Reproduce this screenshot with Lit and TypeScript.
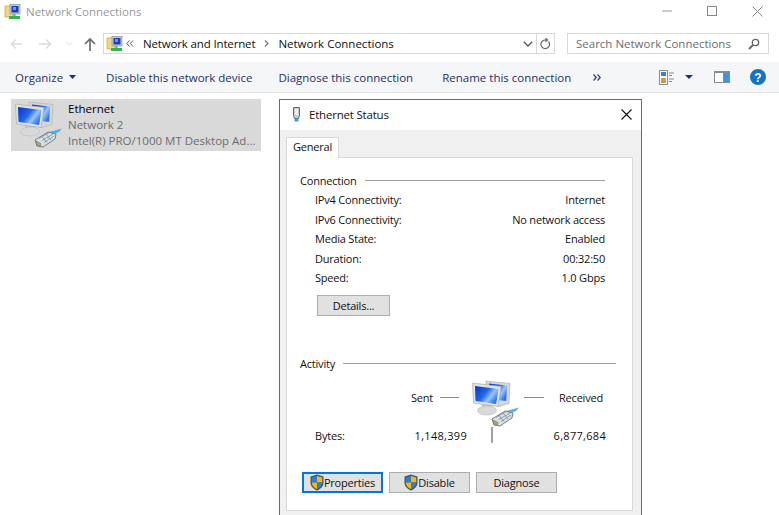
import { LitElement, html, css } from "lit";
import { customElement } from "lit/decorators.js";

const folderIcon = html`<svg width="17" height="17" viewBox="0 0 17 17">
  <path d="M1 3h5l1-1h6v6H9v6H1z" fill="#f3d77e" stroke="#c9a94f" stroke-width=".8" />
  <rect x="6" y="1.500" width="10" height="9.500" fill="#c7cdd3" stroke="#8a929a" stroke-width=".7" />
  <rect x="7.500" y="3" width="7" height="6.500" fill="#1a3fb4" />
  <rect x="9" y="4" width="3" height="3" fill="#6d9be8" />
  <rect x="9.500" y="11" width="2" height="2" fill="#8a929a" />
  <rect x="5" y="13" width="11" height="3" fill="#32b44a" />
</svg>`;

// two monitors and an ethernet plug, shared by the list item and the dialog
const networkIcon = html`<svg width="48" height="48" viewBox="0 0 48 48">
  <defs>
    <linearGradient id="scr" x1="0" y1="0" x2="1" y2=".6">
      <stop offset="0" stop-color="#0b35c4" />
      <stop offset=".5" stop-color="#1f68e8" />
      <stop offset=".75" stop-color="#9cc4f6" />
      <stop offset="1" stop-color="#2a78ee" />
    </linearGradient>
  </defs>
  <path d="M14 1l24 2.500-1 20-10 3-13-3z" fill="#d5d7d5" stroke="#b2b4b2" stroke-width=".7" />
  <path d="M17 3.500l18 2-.7 15.500-17.300-2z" fill="url(#scr)" />
  <path d="M10 22h9l1 6h-10z" fill="#c5c7c5" />
  <ellipse cx="15" cy="30.500" rx="9.500" ry="4.500" fill="#d8dad8" stroke="#b9bbb9" stroke-width=".6" />
  <path d="M.5 3l28.500 3.500-3 20L1.500 23z" fill="#e0e2e0" stroke="#aeb0ae" stroke-width=".7" />
  <path d="M3 6l23.500 3-2.300 15L3.500 21z" fill="url(#scr)" />
  <path d="M34 31l13-3.500-3 3.500-6 2.500z" fill="#4fb4e8" />
  <path d="M20 39l13-8 8 2-1 5-12 8-6-1z" fill="#d7e0e4" stroke="#6a767e" stroke-width=".9" />
  <path d="M21 40l5 2.500-.5 2.500-4-1z" fill="#b9a25c" stroke="#5e6a70" stroke-width=".5" />
  <path d="M24 37.500l11-6.500M27 39.500l11-6.500M29 41.500l10-6.500M27 35.500l5 6M31 33l5 6" stroke="#7f8f97" stroke-width=".8" fill="none" />
</svg>`;

const shieldIcon = html`<svg width="14" height="17" viewBox="0 0 14 17">
  <path d="M7 .5l6.500 2v6c0 4-3 6.500-6.500 8-3.500-1.500-6.500-4-6.500-8v-6z" fill="#47566a" />
  <path d="M7 2L1.800 3.500V8.500H7z" fill="#2a7fd0" />
  <path d="M7 2l5.200 1.500V8.500H7z" fill="#f4b619" />
  <path d="M1.800 8.500H7V15C4 13.800 1.800 11.700 1.800 8.500z" fill="#f4b619" />
  <path d="M12.200 8.500H7V15c3-1.200 5.200-3.300 5.200-6.500z" fill="#2a7fd0" />
</svg>`;

const statusRows = [
  ["IPv4 Connectivity:", "Internet"],
  ["IPv6 Connectivity:", "No network access"],
  ["Media State:", "Enabled"],
  ["Duration:", "00:32:50"],
  ["Speed:", "1.0 Gbps"],
];

@customElement("app-root")
export class AppRoot extends LitElement {
  static styles = css`
    :host {
      display: block;
      position: relative;
      height: 515px;
      overflow: hidden;
      background: #fff;
      font-family: "Open Sans", "Liberation Sans", sans-serif;
      font-size: 11.5px;
      color: #000;
    }
    svg {
      display: block;
      flex-shrink: 0;
    }
    .titlebar {
      height: 30px;
      display: flex;
      align-items: center;
      padding: 0 16px 7px 4px;
      box-sizing: border-box;
      gap: 5px;
      color: #999;
    }
    .titlebar .name {
      flex: 1;
    }
    .controls {
      display: flex;
      gap: 35px;
    }
    .nav {
      height: 32px;
      display: flex;
      align-items: flex-start;
      padding: 3px 10px 0 9px;
      box-sizing: border-box;
    }
    .arrows {
      width: 94px;
      height: 21px;
      display: flex;
      align-items: center;
    }
    .address {
      width: 452px;
      height: 21px;
      box-sizing: border-box;
      border: 1px solid #d9d9d9;
      display: flex;
      align-items: center;
      padding-left: 2px;
      color: #111;
    }
    .crumbs {
      flex: 1;
      display: flex;
      align-items: center;
    }
    .crumbs .tight {
      letter-spacing: -0.15px;
    }
    .refresh {
      width: 17px;
      height: 100%;
      border-left: 1px solid #d9d9d9;
      display: flex;
      align-items: center;
      justify-content: center;
    }
    .search {
      margin-left: 12px;
      width: 202px;
      height: 21px;
      box-sizing: border-box;
      border: 1px solid #d9d9d9;
      display: flex;
      align-items: center;
      justify-content: space-between;
      padding: 0 8px;
      color: #6d6d6d;
    }
    .toolbar {
      height: 31px;
      background: #f5f6f7;
      border-bottom: 1px solid #e5e5e5;
      display: flex;
      align-items: center;
      padding: 0 13px 0 15px;
      box-sizing: border-box;
      color: #1e2f6e;
    }
    .toolbar .spacer {
      flex: 1;
    }
    .item {
      margin: 6px 0 0 11px;
      width: 250px;
      height: 52px;
      background: #d9d9d9;
      display: flex;
      padding: 2px 0 0 4px;
      box-sizing: border-box;
      gap: 5px;
      line-height: 16px;
    }
    .item .sub {
      color: #6d6d6d;
    }
    .dialog {
      position: absolute;
      left: 279px;
      top: 99px;
      width: 363px;
      height: 430px;
      box-sizing: border-box;
      border: 1px solid #6b6b6b;
      background: #f0f0f0;
      color: #111;
      font-size: 11px;
      letter-spacing: -0.2px;
    }
    .dlg-title {
      height: 30px;
      box-sizing: border-box;
      background: #fff;
      display: flex;
      align-items: center;
      padding: 0 9px 2px 12px;
      gap: 8px;
      font-size: 11.5px;
    }
    .dlg-title .name {
      flex: 1;
    }
    .tab {
      margin: 7px 0 -1px 6px;
      width: 53px;
      height: 21px;
      box-sizing: border-box;
      background: #fff;
      border: 1px solid #d9d9d9;
      border-bottom: none;
      position: relative;
      z-index: 1;
      text-align: center;
      line-height: 17px;
    }
    .panel {
      margin-left: 6px;
      width: 347px;
      height: 354px;
      box-sizing: border-box;
      background: #fff;
      border: 1px solid #d9d9d9;
      padding: 14px 0 0 13px;
    }
    .legend {
      display: flex;
      align-items: center;
      height: 16px;
      gap: 8px;
      width: 316px;
    }
    .legend::after {
      content: "";
      flex: 1;
      height: 1px;
      background: #a0a0a0;
    }
    .legend.connection {
      width: 305px;
    }
    .rows {
      margin: 2px 0 0 15px;
      width: 290px;
      display: grid;
      grid-auto-rows: 19.5px;
      align-items: center;
    }
    .row {
      display: flex;
      justify-content: space-between;
    }
    .btn {
      box-sizing: border-box;
      height: 21px;
      border: 1px solid #adadad;
      background: #e1e1e1;
      display: flex;
      align-items: center;
      justify-content: center;
    }
    .details {
      width: 73px;
      margin: 7.500px 0 39px 17px;
    }
    .traffic {
      margin-top: 9px;
      width: 305px;
      height: 40px;
      display: grid;
      grid-template-columns: 172px 48px 1fr;
    }
    .traffic .side {
      display: flex;
      align-items: center;
      height: 35px;
    }
    .dash {
      height: 1px;
      background: #8a8a8a;
    }
    .sent {
      justify-content: flex-end;
      gap: 7px;
      padding-right: 13px;
      box-sizing: border-box;
    }
    .sent .dash {
      width: 19px;
    }
    .recv {
      gap: 15px;
      padding-left: 4px;
    }
    .recv .dash {
      width: 20px;
      flex-shrink: 0;
    }
    .bytes {
      margin: 6px 0 0 15px;
      width: 291px;
      height: 18px;
      display: grid;
      grid-template-columns: 152px 1fr auto;
      align-items: center;
    }
    .bytes .num {
      letter-spacing: 0.3px;
    }
    .bytes .first {
      display: flex;
      justify-content: space-between;
    }
    .tick {
      width: 2px;
      height: 16px;
      background: #a0a0a0;
      margin-left: 24px;
    }
    .actions {
      margin: 28px 0 0 2px;
      display: flex;
      gap: 6px;
    }
    .actions .btn {
      width: 81px;
    }
    .actions .primary {
      border: 2px solid #0078d7;
    }
  `;

  render() {
    return html`
      <div class="titlebar">
        ${folderIcon}
        <span class="name">Network Connections</span>
        <div class="controls">
          <svg width="10" height="10" viewBox="0 0 10 10"><path d="M0 5h10" stroke="#999" /></svg>
          <svg width="10" height="10" viewBox="0 0 10 10"><rect x=".5" y=".5" width="9" height="9" fill="none" stroke="#888" /></svg>
          <svg width="11" height="11" viewBox="0 0 11 11"><path d="M.5 .5l10 10M10.500 .5l-10 10" stroke="#888" /></svg>
        </div>
      </div>
      <div class="nav">
        <div class="arrows">
          <svg width="12" height="12" viewBox="0 0 12 12" style="margin-left:1px"><path d="M12 6H1.500M6 1.500L1.500 6 6 10.500" fill="none" stroke="#dcdcdc" stroke-width="1.500" /></svg>
          <svg width="13" height="12" viewBox="0 0 13 12" style="margin-left:17px"><path d="M0 6h11.500M7 1.500L11.500 6 7 10.500" fill="none" stroke="#dcdcdc" stroke-width="1.500" /></svg>
          <svg width="7" height="5" viewBox="0 0 7 5" style="margin-left:14px"><path d="M.5 1L3.500 4l3-3" fill="none" stroke="#dcdcdc" /></svg>
          <svg width="12" height="14" viewBox="0 0 12 14" style="margin-left:11px"><path d="M6 14V2M1 7l5-5 5 5" fill="none" stroke="#6d6d6d" stroke-width="1.700" /></svg>
        </div>
        <div class="address">
          ${folderIcon}
          <div class="crumbs">
            <svg width="8" height="7" viewBox="0 0 8 7" style="margin:0 9px 0 3px"><path d="M3.500 .5L.8 3.500l2.700 3M7 .5L4.300 3.500 7 6.500" fill="none" stroke="#555" /></svg>
            <span class="tight">Network and Internet</span>
            <svg width="5" height="7" viewBox="0 0 5 7" style="margin:0 9px"><path d="M1 .5l3 3-3 3" fill="none" stroke="#777" stroke-width="1.200" /></svg>
            <span>Network Connections</span>
          </div>
          <svg width="10" height="6" viewBox="0 0 10 6" style="margin-right:3px"><path d="M.8 .8L5 5l4.200-4.200" fill="none" stroke="#555" stroke-width="1.300" /></svg>
          <div class="refresh">
            <svg width="11" height="12" viewBox="0 0 11 12"><path d="M8.500 3.500A4.300 4.300 0 1 1 5 2H7.500M5.500 .2L7.500 2 5.500 3.800" fill="none" stroke="#666" stroke-width="1.200" /></svg>
          </div>
        </div>
        <div class="search">
          <span>Search Network Connections</span>
          <svg width="12" height="12" viewBox="0 0 12 12"><circle cx="7.500" cy="4.500" r="3.200" fill="none" stroke="#666" stroke-width="1.300" /><path d="M5 7l-4 4" stroke="#666" stroke-width="1.800" /></svg>
        </div>
      </div>
      <div class="toolbar">
        <span>Organize</span>
        <svg width="7" height="4" viewBox="0 0 7 4" style="margin:0 30px 0 6px"><path d="M0 0h7L3.500 4z" fill="#1e2f6e" /></svg>
        <span style="margin-right:26px">Disable this network device</span>
        <span style="margin-right:29px">Diagnose this connection</span>
        <span>Rename this connection</span>
        <svg width="8" height="7" viewBox="0 0 8 7" style="margin-left:22px"><path d="M.5 .5l2.800 3-2.800 3M4.500 .5l2.800 3-2.800 3" fill="none" stroke="#1e2f6e" stroke-width="1.100" /></svg>
        <span class="spacer"></span>
        <svg width="15" height="15" viewBox="0 0 15 15">
          <rect x=".5" y=".5" width="8" height="14" fill="#fff" stroke="#8c8c8c" />
          <rect x="2" y="2" width="5" height="4" fill="#3d7fd0" />
          <rect x="2" y="8" width="5" height="5" fill="#c9a04a" />
          <path d="M10 3h5M10 5.500h3M10 9h5M10 11.500h3" stroke="#8c8c8c" />
        </svg>
        <svg width="8" height="4" viewBox="0 0 8 4" style="margin:0 21px 0 11px"><path d="M0 0h8L4 4z" fill="#1e2f6e" /></svg>
        <svg width="16" height="12" viewBox="0 0 16 12">
          <rect width="16" height="12" fill="#8c8c8c" />
          <rect x="1" y="2" width="8" height="9" fill="#fff" />
          <rect x="10" y="2" width="5" height="9" fill="#3d94e6" />
        </svg>
        <svg width="16" height="16" viewBox="0 0 16 16" style="margin-left:20px">
          <circle cx="8" cy="8" r="8" fill="#1572c9" />
          <text x="8" y="12.500" text-anchor="middle" font-family="Liberation Sans" font-weight="700" font-size="12" fill="#fff">?</text>
        </svg>
      </div>
      <div class="item">
        ${networkIcon}
        <div>
          <div>Ethernet</div>
          <div class="sub">Network 2</div>
          <div class="sub">Intel(R) PRO/1000 MT Desktop Ad...</div>
        </div>
      </div>
      <div class="dialog">
        <div class="dlg-title">
          <svg width="9" height="16" viewBox="0 0 9 16">
            <path d="M1.500 1.500h6v8l-1 3h-4l-1-3z" fill="#c5ccd3" stroke="#5c6a78" />
            <rect x="3" y="3" width="3" height="6" fill="#eef1f4" />
            <rect x="2.500" y="12.500" width="4" height="3" fill="#35a4dd" />
          </svg>
          <span class="name">Ethernet Status</span>
          <svg width="11" height="11" viewBox="0 0 11 11"><path d="M.5 .5l10 10M10.500 .5l-10 10" stroke="#111" stroke-width="1.100" /></svg>
        </div>
        <div class="tab">General</div>
        <div class="panel">
          <div class="legend connection">Connection</div>
          <div class="rows">
            ${statusRows.map(
              ([label, value]) => html`<div class="row"><span>${label}</span><span>${value}</span></div>`
            )}
          </div>
          <div class="btn details">Details...</div>
          <div class="legend">Activity</div>
          <div class="traffic">
            <div class="side sent"><span>Sent</span><span class="dash"></span></div>
            ${networkIcon}
            <div class="side recv"><span class="dash"></span><span>Received</span></div>
          </div>
          <div class="bytes">
            <div class="first"><span>Bytes:</span><span class="num">1,148,399</span></div>
            <span class="tick"></span>
            <span class="num">6,877,684</span>
          </div>
          <div class="actions">
            <div class="btn primary">${shieldIcon}Properties</div>
            <div class="btn">${shieldIcon}Disable</div>
            <div class="btn">Diagnose</div>
          </div>
        </div>
      </div>
    `;
  }
}
